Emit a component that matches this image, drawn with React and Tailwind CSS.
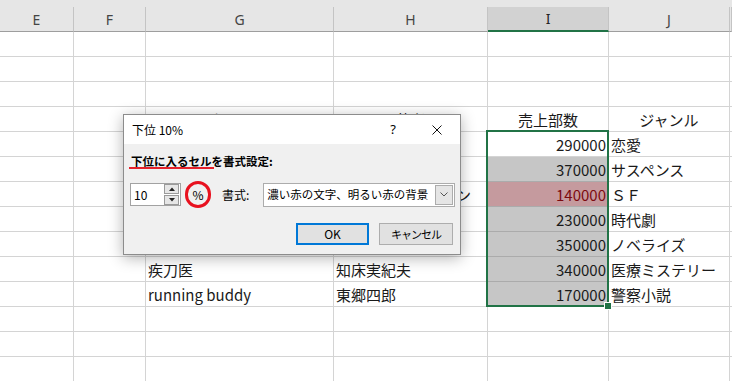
import React from 'react';

const COLS = [
  { key: 'E', w: 'w-[74px]' },
  { key: 'F', w: 'w-[72px]' },
  { key: 'G', w: 'w-[188px]' },
  { key: 'H', w: 'w-[154px]' },
  { key: 'I', w: 'w-[121px]' },
  { key: 'J', w: 'w-[121px]' },
  { key: 'K', w: 'flex-1' },
];

// rows of the sheet, only the visible columns that hold something
const ROWS = [
  {},
  {},
  {},
  { G: 'タイトル', H: '著者', I: '売上部数', J: 'ジャンル', head: true },
  { G: '春の約束', H: '山田花子', I: '290000', J: '恋愛' },
  { G: '闇の証言', H: '佐藤健一', I: '370000', J: 'サスペンス' },
  { G: '星の海へ', H: 'トーマス・ブラウン', I: '140000', J: 'ＳＦ', low: true },
  { G: '江戸の風', H: '高橋一郎', I: '230000', J: '時代劇' },
  { G: '銀河の果て', H: '鈴木太郎', I: '350000', J: 'ノベライズ' },
  { G: '疾刀医', H: '知床実紀夫', I: '340000', J: '医療ミステリー' },
  { G: 'running buddy', H: '東郷四郎', I: '170000', J: '警察小説' },
  {},
  {},
  {},
];

function Cell({ col, row, idx }) {
  const text = row[col.key];
  const inSel = col.key === 'I' && idx >= 5 && idx <= 10;
  let bg = 'bg-white';
  let color = 'text-[#1a1a1a]';
  if (inSel) bg = row.low ? 'bg-[#c59a9e]' : 'bg-[#c6c6c6]';
  if (inSel && row.low) color = 'text-[#7c0a0f]';
  const isNum = col.key === 'I' && !row.head && text;
  const align = row.head ? 'justify-center' : isNum ? 'justify-end' : 'justify-start';
  return (
    <div
      className={`${col.w} shrink-0 h-[25px] border-r border-b ${
        inSel ? 'border-b-[#ababab] border-r-[#d4d4d4]' : 'border-[#d4d4d4]'
      } ${bg} ${color} flex items-center ${align} px-[2px] overflow-visible whitespace-nowrap`}
    >
      {text && <span className="relative z-0 leading-none">{text}</span>}
    </div>
  );
}

function Dialog() {
  return (
    <div className="absolute left-[123px] top-[114px] w-[338px] h-[141px] border border-[#8c8c8c] bg-[#f0f0f0] shadow-[0_3px_14px_rgba(0,0,0,0.3)] font-['Noto_Sans_CJK_JP',sans-serif] text-[12px] text-black z-20">
      {/* title bar */}
      <div className="h-[29px] bg-white flex items-center pl-[8px]">
        <span>下位 10%</span>
        <span className="ml-auto mr-[36px] font-['Noto_Sans',sans-serif] text-[13px]">?</span>
        <svg width="10" height="10" viewBox="0 0 10 10" className="mr-[18px]">
          <path d="M0.5 0.5 L9.5 9.5 M9.5 0.5 L0.5 9.5" stroke="#111" strokeWidth="1" />
        </svg>
      </div>

      <div className="pl-[6px]">
        <div className="mt-[9px] ml-[1px] h-[16px] leading-[16px] font-bold text-[11.5px] whitespace-nowrap">
          <span className="relative inline-block leading-[16px]">
            下位に入るセル
            <span className="absolute left-[-2px] right-[-2px] top-[14px] h-[2px] bg-[#e5202a]" />
          </span>
          を書式設定:
        </div>

        {/* controls */}
        <div className="mt-[14px] h-[23px] flex items-center whitespace-nowrap">
          <div className="w-[51px] h-[23px] shrink-0 border border-[#a2a2a2] bg-white flex">
            <div className="flex-1 pl-[3px] flex items-center">10</div>
            <div className="w-[16px] flex flex-col gap-[1px] pr-[1px]">
              <div className="h-[10px] border border-[#9a9a9a] bg-[#e6e6e6] flex items-center justify-center">
                <svg width="6" height="4" viewBox="0 0 6 4"><path d="M0 4 L3 0.5 L6 4 Z" fill="#222" /></svg>
              </div>
              <div className="h-[10px] border border-[#9a9a9a] bg-[#e6e6e6] flex items-center justify-center">
                <svg width="6" height="4" viewBox="0 0 6 4"><path d="M0 0 L3 3.5 L6 0 Z" fill="#222" /></svg>
              </div>
            </div>
          </div>
          <div className="ml-[4px] shrink-0 w-[26px] h-[27px] rounded-full border-[3px] border-[#e8111f] flex items-center justify-center text-[12px]">
            %
          </div>
          <span className="ml-[11px] shrink-0">書式:</span>
          <div className="ml-[14px] shrink-0 w-[192px] h-[24px] border border-[#acacac] bg-white flex items-center">
            <span className="pl-[3px] text-[11.5px] whitespace-nowrap">濃い赤の文字、明るい赤の背景</span>
            <div className="ml-auto mr-[1px] w-[18px] h-[20px] border border-[#acacac] bg-[#e5e5e5] flex items-center justify-center">
              <svg width="8" height="5" viewBox="0 0 8 5">
                <path d="M0.5 0.5 L4 4 L7.5 0.5" stroke="#555" strokeWidth="1" fill="none" />
              </svg>
            </div>
          </div>
        </div>

        {/* buttons */}
        <div className="mt-[17px] flex justify-end gap-[10px] pr-[7px]">
          <button className="w-[73px] h-[22px] border-2 border-[#0078d7] bg-[#e1e1e1] flex items-center justify-center text-[12px]">
            OK
          </button>
          <button className="w-[74px] h-[22px] border border-[#adadad] bg-[#e1e1e1] flex items-center justify-center text-[11px] tracking-[-1px]">
            キャンセル
          </button>
        </div>
      </div>
    </div>
  );
}

export default function App() {
  return (
    <div className="relative w-[732px] h-[381px] overflow-hidden bg-white font-['Noto_Sans_CJK_JP',sans-serif] text-[15px]">
      {/* column headers */}
      <div className="h-[32px] bg-[#e6e6e6] pt-[7px] flex">
        {COLS.map((c) => (
          <div
            key={c.key}
            className={`${c.w} shrink-0 h-[25px] border-r border-r-[#c4c4c4] flex items-center justify-center font-['Noto_Sans',sans-serif] text-[14px] ${
              c.key === 'I'
                ? 'bg-[#d2d2d2] border-b-2 border-b-[#217346] text-[#222]'
                : 'border-b border-b-[#9e9e9e] text-[#444]'
            }`}
          >
            {c.key === 'K' ? '' : c.key}
          </div>
        ))}
      </div>

      {/* sheet rows */}
      {ROWS.map((row, i) => (
        <div key={i} className="flex">
          {COLS.map((c) => (
            <Cell key={c.key} col={c} row={row} idx={i} />
          ))}
        </div>
      ))}

      {/* selection outline on column I */}
      <div className="absolute left-[486px] top-[130px] w-[123px] h-[177px] border-2 border-[#217346] pointer-events-none z-10" />
      <div className="absolute left-[604px] top-[302px] w-[8px] h-[8px] bg-[#217346] border border-white z-10" />

      <Dialog />
    </div>
  );
}
